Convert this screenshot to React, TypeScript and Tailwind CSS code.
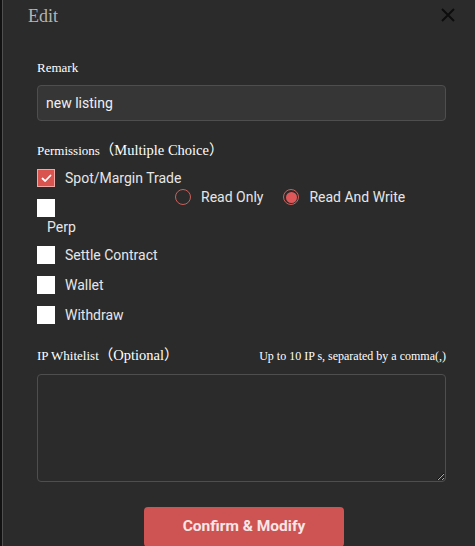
import React, { useState } from 'react';

const serif = "font-['Liberation_Serif','Noto_Sans_CJK_SC',serif]";
const sans = "font-['Roboto','Noto_Sans',sans-serif]";

function Checkbox({ checked }: { checked: boolean }) {
  if (checked) {
    return (
      <span className="w-[18px] h-[18px] shrink-0 bg-[#d9534f] border border-[#f0a8a6] flex items-center justify-center">
        <svg width="11" height="9" viewBox="0 0 11 9" fill="none">
          <path d="M1.5 4.5 L4.2 7 L9.5 1.5" stroke="#ffffff" strokeWidth="1.8" strokeLinecap="round" strokeLinejoin="round" />
        </svg>
      </span>
    );
  }
  return <span className="block w-[18px] h-[18px] shrink-0 bg-white" />;
}

function Radio({ checked, label }: { checked: boolean; label: string }) {
  return (
    <div className="flex items-center gap-[10px]">
      <span className="w-[16px] h-[16px] rounded-full border border-[#c9605b] flex items-center justify-center">
        {checked && <span className="w-[11px] h-[11px] rounded-full bg-[#e0575a]" />}
      </span>
      <span className="text-[14px] leading-[20px] text-[#e6e6e6]">{label}</span>
    </div>
  );
}

export default function App() {
  const [remark, setRemark] = useState('new listing');

  return (
    <div className="w-[475px] h-[546px] bg-[#2b2b2b] flex overflow-hidden">
      <div className="w-[2px] bg-[#121212] shrink-0" />
      <div className="w-px bg-[#505050] shrink-0" />

      <div className="flex-1 flex flex-col">
        {/* Header */}
        <div className="flex items-start justify-between pl-[25px] pr-[20px] pt-[4px]">
          <h2 className={`${serif} text-[18px] leading-[24px] text-[#b4b4b4]`}>Edit</h2>
          <svg width="14" height="14" viewBox="0 0 14 14" className="mt-[4px]">
            <path d="M1 1 L13 13 M13 1 L1 13" stroke="#0d0d0d" strokeWidth="2" />
          </svg>
        </div>

        {/* Body */}
        <div className={`flex flex-col pl-[34px] pr-[29px] ${sans}`}>
          <label className={`${serif} mt-[31px] text-[13px] leading-[18px] text-white`}>Remark</label>
          <input
            value={remark}
            onChange={(e) => setRemark(e.target.value)}
            className="mt-[8px] h-[36px] w-full bg-[#363636] border border-[#4e4e4e] rounded-[4px] px-[8px] text-[14px] text-[#f0f0f0] outline-none"
          />

          <div className={`${serif} mt-[19px] text-[13px] leading-[20px] text-white`}>
            Permissions<span className="text-[14.5px]">（Multiple Choice）</span>
          </div>

          <div className="mt-[8px] flex items-start">
            <div className="w-[138px] flex flex-col">
              <div className="flex items-center gap-[10px] h-[18px]">
                <Checkbox checked />
                <span className="text-[14px] text-[#e6e6e6] whitespace-nowrap">Spot/Margin Trade</span>
              </div>
              <div className="mt-[12px]">
                <Checkbox checked={false} />
              </div>
              <span className="ml-[10px] text-[14px] leading-[20px] text-[#e6e6e6]">Perp</span>
            </div>
            <div className="mt-[18px] flex items-center gap-[20px]">
              <Radio checked={false} label="Read Only" />
              <Radio checked label="Read And Write" />
            </div>
          </div>

          {['Settle Contract', 'Wallet', 'Withdraw'].map((item, i) => (
            <div key={item} className={`${i === 0 ? 'mt-[9px]' : 'mt-[12px]'} flex items-center gap-[10px] h-[18px]`}>
              <Checkbox checked={false} />
              <span className="text-[14px] text-[#e6e6e6]">{item}</span>
            </div>
          ))}

          <div className={`${serif} mt-[22px] flex items-baseline justify-between leading-[18px] text-white`}>
            <span className="text-[13px]">
              IP Whitelist<span className="text-[14.5px]">（Optional）</span>
            </span>
            <span className="text-[12px]">Up to 10 IP s, separated by a comma(,)</span>
          </div>
          <textarea className="mt-[9px] h-[108px] w-full bg-transparent border border-[#4e4e4e] rounded-[4px] outline-none text-[14px] text-[#f0f0f0] p-[8px]" />

          <button className="mt-[25px] ml-[107px] w-[200px] h-[40px] rounded-[4px] bg-[#cd5453] text-[15.5px] font-bold text-[#f8e6e6]">
            Confirm &amp; Modify
          </button>
        </div>
      </div>
    </div>
  );
}
